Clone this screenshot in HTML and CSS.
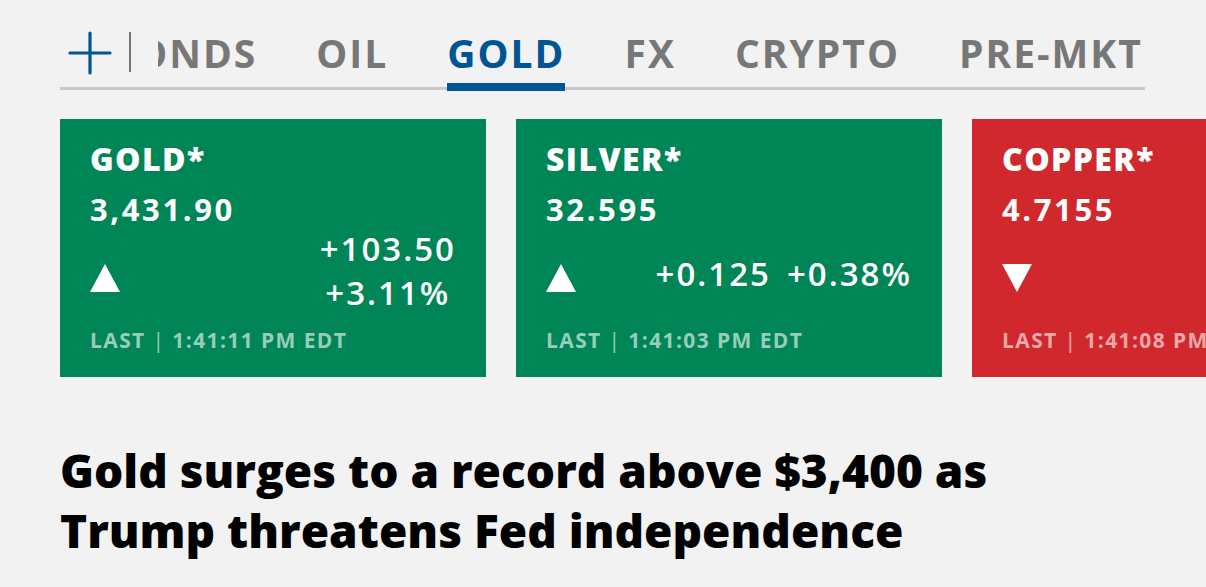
FILE: index.html
```html
<!DOCTYPE html>
<html>
<head>
<meta charset="utf-8">
<link rel="stylesheet" href="styles.css">
</head>
<body>
<div class="page">
  <nav class="tabbar">
    <button class="add" aria-label="Add">
      <svg width="44" height="44" viewBox="0 0 44 44"><path d="M22 2v40M2 22h40" stroke="#005594" stroke-width="3.2" stroke-linecap="round" fill="none"/></svg>
    </button>
    <span class="sep"></span>
    <div class="tabs">
      <ul class="tablist">
        <li class="tab first">BONDS</li>
        <li class="tab">OIL</li>
        <li class="tab active">GOLD</li>
        <li class="tab">FX</li>
        <li class="tab">CRYPTO</li>
        <li class="tab">PRE-MKT</li>
      </ul>
    </div>
  </nav>

  <div class="cards">
    <div class="card up">
      <div class="sym">GOLD*</div>
      <div class="price">3,431.90</div>
      <div class="move">
        <svg class="arrow" width="30" height="28" viewBox="0 0 30 28"><path d="M15 0L30 28H0Z" fill="#fff"/></svg>
        <div class="change stacked"><span>+103.50</span><span>+3.11%</span></div>
      </div>
      <div class="last">LAST <span class="bar">|</span> 1:41:11 PM EDT</div>
    </div>
    <div class="card up">
      <div class="sym">SILVER*</div>
      <div class="price">32.595</div>
      <div class="move">
        <svg class="arrow" width="30" height="28" viewBox="0 0 30 28"><path d="M15 0L30 28H0Z" fill="#fff"/></svg>
        <div class="change"><span>+0.125</span><span>+0.38%</span></div>
      </div>
      <div class="last">LAST <span class="bar">|</span> 1:41:03 PM EDT</div>
    </div>
    <div class="card down">
      <div class="sym">COPPER*</div>
      <div class="price">4.7155</div>
      <div class="move">
        <svg class="arrow" width="30" height="28" viewBox="0 0 30 28"><path d="M0 0H30L15 28Z" fill="#fff"/></svg>
      </div>
      <div class="last">LAST <span class="bar">|</span> 1:41:08 PM</div>
    </div>
  </div>

  <h1 class="headline">Gold surges to a record above $3,400 as Trump threatens Fed independence</h1>
</div>
</body>
</html>
```

FILE: styles.css
```css
html, body {
  margin: 0;
  padding: 0;
  background: #f2f2f2;
  overflow: hidden;
}
body {
  width: 1206px;
  height: 587px;
  font-family: "Open Sans", "Lato", sans-serif;
}
.page {
  padding: 31px 0 0 60px;
}
.tabbar {
  width: 1085px;
  display: flex;
  align-items: center;
  border-bottom: 3px solid #c8c8c8;
  height: 56px;
}
.add {
  flex: 0 0 44px;
  margin: 0 0 0 8px;
  padding: 0;
  border: 0;
  background: none;
  width: 44px;
  height: 44px;
  display: block;
  align-self: flex-start;
}
.add svg { display: block; }
.sep {
  flex: 0 0 2px;
  width: 2px;
  height: 40px;
  background: #777;
  margin-left: 17px;
  align-self: flex-start;
  margin-top: 1px;
}
.tabs {
  flex: 1 1 auto;
  min-width: 0;
  margin-left: 27px;
  height: 56px;
  position: relative;
  clip-path: inset(0 -10px -20px 0);
}
.tablist {
  list-style: none;
  margin: 0 0 0 -50px;
  padding: 0;
  display: flex;
  gap: 59px;
  height: 56px;
}
.tab {
  flex: 0 0 auto;
  font-size: 39px;
  font-weight: 700;
  letter-spacing: 2px;
  color: #777;
  line-height: 44px;
  position: relative;
  white-space: nowrap;
}
.tab.active {
  color: #005594;
}
.tab.active::after {
  content: "";
  position: absolute;
  left: 0;
  right: 0;
  top: 52px;
  height: 8px;
  background: #005594;
  z-index: 2;
}

.cards {
  display: flex;
  gap: 30px;
  margin-top: 29px;
}
.card {
  flex: 0 0 426px;
  height: 258px;
  box-sizing: border-box;
  padding: 22px 32px 0 30px;
  color: #fff;
  display: flex;
  flex-direction: column;
}
.card.up { background: #008556; }
.card.down { background: #d1282e; }
.sym {
  font-size: 32px;
  font-weight: 800;
  letter-spacing: 1.4px;
  line-height: 36px;
}
.price {
  font-size: 31px;
  font-weight: 700;
  letter-spacing: 2.6px;
  line-height: 36px;
  margin-top: 14px;
}
.move {
  display: flex;
  align-items: center;
  justify-content: space-between;
  height: 94px;
}
.arrow { display: block; margin-top: 8px; }
.change {
  display: flex;
  gap: 16px;
  font-size: 33px;
  font-weight: 600;
  letter-spacing: 2px;
  line-height: 44px;
  margin-right: -2px;
}
.change.stacked {
  flex-direction: column;
  align-items: center;
  gap: 0;
  margin-top: -6px;
}
.last {
  font-size: 21px;
  font-weight: 700;
  letter-spacing: 1.4px;
  color: rgba(255,255,255,0.6);
  line-height: 26px;
  margin-top: 6px;
  white-space: nowrap;
}
.bar { font-weight: 400; }

.headline {
  margin: 63px 0 0 0;
  width: 1000px;
  font-size: 46px;
  line-height: 60px;
  font-weight: 800;
  color: #000;
}
```
